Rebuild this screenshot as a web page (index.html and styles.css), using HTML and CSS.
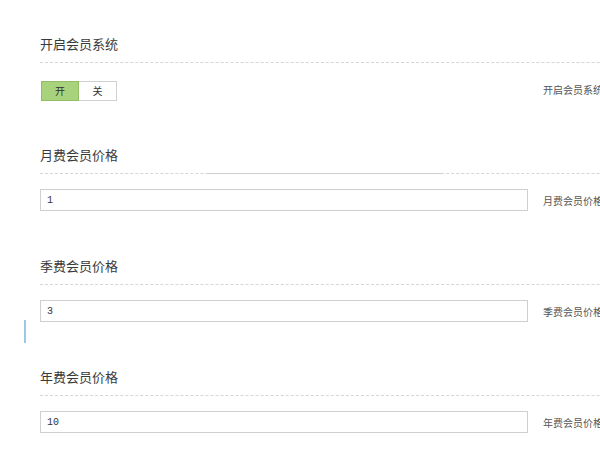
FILE: index.html
```html
<!DOCTYPE html>
<html lang="zh-CN">

<head>
  <meta charset="UTF-8">
  <meta name="viewport" content="width=device-width, initial-scale=1.0">
  <title>会员设置</title>
  <link rel="stylesheet" href="styles.css">
</head>

<body>
  <form class="settings">
    <div class="settings__group">
      <h3 class="settings__title">开启会员系统</h3>
      <div class="settings__row">
        <div class="settings__control">
          <div class="switch">
            <span class="switch__btn switch__btn_active">开</span>
            <span class="switch__btn">关</span>
          </div>
        </div>
        <span class="settings__help">开启会员系统</span>
      </div>
    </div>

    <div class="settings__group settings__group_mark">
      <h3 class="settings__title">月费会员价格</h3>
      <div class="settings__row">
        <div class="settings__control">
          <input class="settings__input" type="text" value="1">
        </div>
        <span class="settings__help">月费会员价格</span>
      </div>
    </div>

    <div class="settings__group settings__group_caret">
      <h3 class="settings__title">季费会员价格</h3>
      <div class="settings__row">
        <div class="settings__control">
          <input class="settings__input" type="text" value="3">
        </div>
        <span class="settings__help">季费会员价格</span>
      </div>
    </div>

    <div class="settings__group">
      <h3 class="settings__title">年费会员价格</h3>
      <div class="settings__row">
        <div class="settings__control">
          <input class="settings__input" type="text" value="10">
        </div>
        <span class="settings__help">年费会员价格</span>
      </div>
    </div>
  </form>
</body>

</html>
```

FILE: styles.css
```css
html,
body {
  margin: 0;
  padding: 0;
  background-color: #fff;
  overflow: hidden;
}

body {
  font-family: "Noto Sans CJK SC", "Noto Sans", sans-serif;
  color: #333;
}

.settings {
  padding: 34px 0 0 40px;
  width: 700px;
}

.settings__group {
  position: relative;
  margin-bottom: 45px;
}

.settings__title {
  margin: 0;
  font-size: 13px;
  font-weight: normal;
  line-height: 20px;
  padding-bottom: 8px;
  border-bottom: 1px dashed #d6d6d6;
  color: #3a3a3a;
}

.settings__row {
  display: flex;
  align-items: center;
  gap: 15px;
  margin-top: 15px;
  height: 22px;
}

.settings__control {
  width: 488px;
  flex: 0 0 auto;
  display: flex;
  align-items: center;
}

.settings__help {
  font-size: 10px;
  color: #555;
  white-space: nowrap;
}

.settings__input {
  box-sizing: border-box;
  width: 100%;
  height: 22px;
  margin: 0;
  padding: 0 6px;
  border: 1px solid #cfcfcf;
  font-family: "Liberation Mono", "DejaVu Sans Mono", monospace;
  font-size: 10px;
  color: #333;
  outline: none;
}

.switch {
  display: flex;
  margin: 3px 0 0 1px;
  align-self: flex-start;
}

.switch__btn {
  box-sizing: border-box;
  width: 38px;
  height: 20px;
  display: flex;
  align-items: center;
  justify-content: center;
  font-size: 10px;
  color: #333;
  background-color: #fff;
  border: 1px solid #d0d0d0;
  border-left: none;
}

.switch__btn_active {
  background-color: #a8d27b;
  border: 1px solid #93bd65;
}

/* leftover line drawn over the dashed rule */
.settings__group_mark::after {
  content: '';
  position: absolute;
  top: 28px;
  left: 167px;
  width: 235px;
  height: 1px;
  background-color: #cfcfcf;
}

/* focus caret left of the third field */
.settings__group_caret::after {
  content: '';
  position: absolute;
  top: 64px;
  left: -16px;
  width: 2px;
  height: 23px;
  background-color: #9cc8e2;
}
```
